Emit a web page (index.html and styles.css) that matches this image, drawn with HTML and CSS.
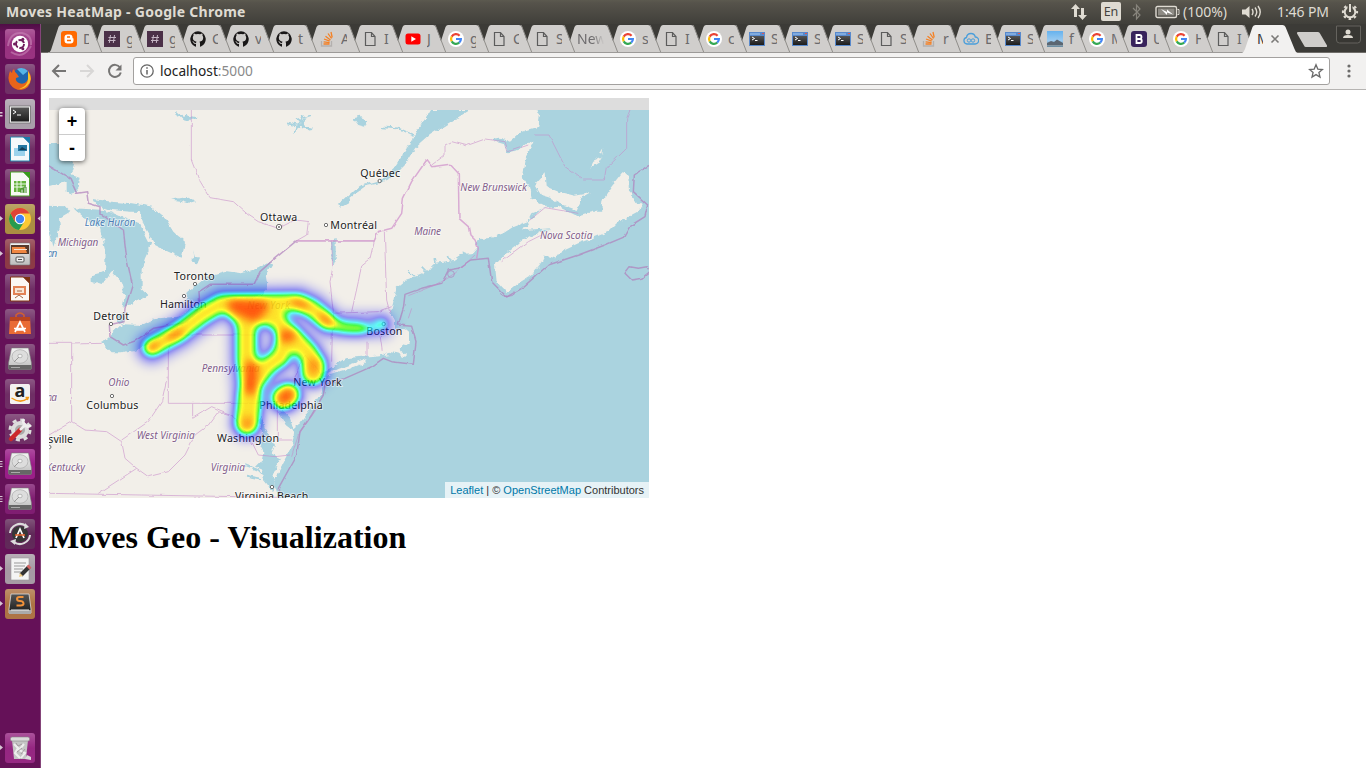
FILE: index.html
```html
<!DOCTYPE html>
<html lang="en">
<head>
<meta charset="utf-8">
<title>Moves HeatMap</title>
<link rel="stylesheet" href="styles.css">
</head>
<body>
<svg class="defs" width="0" height="0" aria-hidden="true">
  <defs>
    <linearGradient id="gloss" x1="0" y1="0" x2="0" y2="1"><stop offset="0" stop-color="#fff" stop-opacity=".22"/><stop offset=".5" stop-color="#fff" stop-opacity=".02"/><stop offset="1" stop-color="#fff" stop-opacity=".03"/></linearGradient>
    <linearGradient id="steel" x1="0" y1="0" x2="0" y2="1"><stop offset="0" stop-color="#f4f4f4"/><stop offset="1" stop-color="#bcbcbc"/></linearGradient>
    <linearGradient id="dark" x1="0" y1="0" x2="0" y2="1"><stop offset="0" stop-color="#555"/><stop offset="1" stop-color="#1c1c1c"/></linearGradient>
    <linearGradient id="sky" x1="0" y1="0" x2="0" y2="1"><stop offset="0" stop-color="#66b2ee"/><stop offset=".6" stop-color="#9ccbf0"/><stop offset="1" stop-color="#69899d"/></linearGradient>
  </defs>
  <symbol id="tab" viewBox="0 0 56 29"><path d="M0 29 Q2 28.500 3 26 L10.500 3 Q11.500 1 13 1 H41 Q43 1 44 3 L51.500 24 L54 29Z" fill="#d0cecc"/><path d="M43 1 L44 3 L54 29" fill="none" stroke="#8f8d8a"/></symbol>
  <symbol id="blog" viewBox="0 0 16 16"><rect width="16" height="16" rx="3" fill="#ff6a00"/><path d="M3.500 6.500a3 3 0 0 1 3-3h2a3 3 0 0 1 3 3q0 1 1 1v2a3 3 0 0 1-3 3h-3a3 3 0 0 1-3-3z" fill="#fff"/><path d="M6 6h3M6 9.500h4" stroke="#ff6a00" stroke-width="1.300"/></symbol>
  <symbol id="hash" viewBox="0 0 16 16"><rect width="16" height="16" fill="#4b3048"/><path d="M6.500 4 5.300 12M10.500 4 9.300 12M4.500 6.500h7.500M4 9.500h7.500" stroke="#c5b5c4" fill="none"/></symbol>
  <symbol id="git" viewBox="0 0 16 16"><path fill="#191717" d="M8 .2a8 8 0 0 0-2.500 15.500c.4 0 .5-.2.500-.4v-2.500c-2 .4-2.600-.9-2.800-1.500-.3-.5-.6-.8-1-1 .8-.3 1.500.4 1.800 1 .6.8 1.300.9 2 .6.1-.6.3-1 .6-1.200-2-.3-3.800-1.200-3.800-3.900 0-.9.3-1.600.8-2.200-.1-.3-.3-1.200.1-2.200 0 0 .7-.2 2.200.9a8 8 0 0 1 4.200 0c1.500-1.100 2.200-.9 2.200-.9.4 1 .2 1.900.1 2.200.5.600.8 1.300.8 2.200 0 2.800-1.800 3.600-3.800 3.900.4.3.6.9.6 1.500v3.100c0 .2.100.5.500.4A8 8 0 0 0 8 .2z"/></symbol>
  <symbol id="so" viewBox="0 0 16 16"><path d="M2.500 10v5h10v-5" fill="none" stroke="#b3b0ae" stroke-width="1.300"/><path d="M4.500 13h6M4.600 10.800l6 .8M5 8l5.700 2.100M6.500 5.200l5 3.700M9 2.500l3.500 5M12 1l1.200 5.500" stroke="#f48024" stroke-width="1.300"/></symbol>
  <symbol id="doc" viewBox="0 0 16 16"><path d="M3.500 1.500h6l3.500 4v9h-9.500zM9.500 1.500v4H13" fill="none" stroke="#5c5c5c" stroke-width="1.200"/></symbol>
  <symbol id="yt" viewBox="0 0 16 16"><rect x=".5" y="2.500" width="15" height="11" rx="2.500" fill="#f00"/><path d="M6.300 5.300 11 8l-4.700 2.700z" fill="#fff"/></symbol>
  <symbol id="goo" viewBox="0 0 16 16"><circle cx="8" cy="8" r="8" fill="#fff"/><g fill="none" stroke-width="2.200"><path d="M11.600 4.700A4.900 4.900 0 0 0 3.700 5.600" stroke="#ea4335"/><path d="M3.700 5.600a5 5 0 0 0 0 4.800" stroke="#fbbc05"/><path d="M3.700 10.400a4.900 4.900 0 0 0 7.500 1.300" stroke="#34a853"/><path d="M11.200 11.700A5 5 0 0 0 12.900 8H8" stroke="#4285f4"/></g></symbol>
  <symbol id="term" viewBox="0 0 16 16"><rect y="1" width="16" height="14" fill="#5889cc"/><path d="M1 3h10" stroke="#a9cdf0"/><path d="M13 2.500h2" stroke="#d55"/><rect x="1" y="5" width="14" height="9" fill="url(#dark)"/><path d="m3 6 2.500 1.500L3 9M6 9.500h2.500" fill="none" stroke="#fff"/></symbol>
  <symbol id="cloud" viewBox="0 0 16 16"><path d="M4 13a3.300 3.300 0 0 1-.5-6.500Q4 2.500 8 2.500q3.500 0 4.300 3.500a3.500 3.500 0 0 1-.3 7z" fill="none" stroke="#4a9eda" stroke-width="1.300"/><circle cx="6" cy="9.500" r="1.700" fill="none" stroke="#4a9eda"/><circle cx="10" cy="9.500" r="1.700" fill="none" stroke="#4a9eda"/></symbol>
  <symbol id="pic" viewBox="0 0 16 16"><rect width="16" height="16" fill="url(#sky)"/><path d="M0 12 4 10l3 1 3-2.500 6 3.500v2H0z" fill="#5b6672"/><path d="M0 14.500h16" stroke="#8297a5"/></symbol>
  <symbol id="boot" viewBox="0 0 16 16"><rect width="16" height="16" rx="3" fill="#38235c"/><path d="M5.500 4h3a2 2 0 0 1 0 4h-3zM5.500 8h3.300a2 2 0 0 1 0 4H5.500z" fill="none" stroke="#fff" stroke-width="1.800"/></symbol>
  <symbol id="disk" viewBox="0 0 30 30"><path d="M6.500 4h17l3 15v5a1.500 1.500 0 0 1-1.500 1.500H5A1.500 1.500 0 0 1 3.500 24v-5z" fill="url(#steel)" stroke="#777" stroke-width=".6"/><path d="M3.500 21h23v3a1.500 1.500 0 0 1-1.500 1.500H5A1.500 1.500 0 0 1 3.500 24z" fill="#666"/><path d="M6 23.500h9" stroke="#aaa"/><ellipse cx="15" cy="12.500" rx="8" ry="6.800" fill="#ddd" stroke="#b0b0b0" stroke-width=".8"/><ellipse cx="15" cy="12" rx="2.200" ry="1.800" fill="#f5f5f5" stroke="#999" stroke-width=".6"/><path d="m9 18 5-5" stroke="#999"/></symbol>
</svg>

<header class="panel">
  <span class="wintitle">Moves HeatMap - Google Chrome</span>
  <div class="indicators">
    <svg class="net" width="18" height="18" viewBox="0 0 18 18"><path d="M5.500 1 10 6H7v8H4V6H1zM12.500 17 8 12h3V5h3v7h3z" fill="#dfdbd2"/></svg>
    <span class="lang">En</span>
    <svg class="bt" width="10" height="18" viewBox="0 0 10 18"><path d="M1 5l7 7-3.500 4V2L8 6l-7 7" fill="none" stroke="#87847c" stroke-width="1.200"/></svg>
    <svg class="bat" width="25" height="14" viewBox="0 0 25 14"><rect x="1" y="1.500" width="20.500" height="11" rx="1.500" fill="none" stroke="#dfdbd2" stroke-width="1.400"/><rect x="3" y="3.500" width="16.500" height="7" fill="#8e8b84"/><path d="M22.500 4.500H24v5h-1.500" fill="none" stroke="#dfdbd2"/><path d="m6 4 6 3v-2.500l6 5-6-2v2.500z" fill="#fff"/></svg>
    <span class="pct">(100%)</span>
    <svg class="vol" width="21" height="16" viewBox="0 0 21 16"><path d="M1 5.500h3.500l4-3.500v12l-4-3.500H1z" fill="#dfdbd2"/><path d="M11 5q2 3 0 6M14 3.500q3.500 4.500 0 9M17 2q4.500 6 0 12" fill="none" stroke="#dfdbd2" stroke-width="1.400"/></svg>
    <span class="clock">1:46 PM</span>
    <svg class="gear" width="18" height="18" viewBox="-9 -9 18 18"><circle r="5.300" fill="none" stroke="#dfdbd2" stroke-width="2"/><circle r="7" fill="none" stroke="#dfdbd2" stroke-width="2.200" stroke-dasharray="2.500 3" stroke-dashoffset="1.200"/><path d="M-2.500-9h5v7h-5z" fill="#504e46"/><path d="M0-8v8" stroke="#dfdbd2" stroke-width="2"/></svg>
  </div>
</header>

<div class="desktop">
<nav class="launcher">
  <svg class="tile" viewBox="0 0 30 30"><rect width="30" height="30" rx="3" fill="#962d7d"/><rect width="30" height="30" rx="3" fill="url(#gloss)"/><path d="M3 17Q5 3 17 4q10 2 9 12M6 23q12 8 20-6" fill="none" stroke="#c985b8" stroke-width="2" opacity=".6"/><circle cx="15" cy="15" r="8.200" fill="#fff"/><circle cx="15" cy="15" r="4" fill="none" stroke="#6f1d5c" stroke-width="1.900" stroke-dasharray="6.800 1.600"/><g fill="#6f1d5c"><circle cx="9.500" cy="15" r="1.500"/><circle cx="17.800" cy="10.200" r="1.500"/><circle cx="17.800" cy="19.800" r="1.500"/></g></svg>
  <svg class="tile" viewBox="0 0 30 30"><rect width="30" height="30" rx="3" fill="#6c2a62"/><rect width="30" height="30" rx="3" fill="url(#gloss)"/><circle cx="16" cy="14" r="9.500" fill="#1f66ad"/><path d="M12 5q6-3 11 2l-5 4z" fill="#56b6e6"/><path d="M5 7Q2 14 5 20q4 6 11 6 9-1 10-11 0-5-3-8 2 6-1 10-3 4-8 2-4-2-3-5l3-1-2-3q-2-1-3-5-2 1-2 4z" fill="#e8641b"/><path d="M23 7q6 9-1 15-3 3-8 3 9-3 9-10z" fill="#fbc22c"/></svg>
  <svg class="tile" viewBox="0 0 30 30"><rect width="30" height="30" rx="3" fill="#a79da8"/><rect width="30" height="30" rx="3" fill="url(#gloss)"/><rect x="4.500" y="7" width="21" height="17" fill="#eee" stroke="#666" stroke-width=".7"/><rect x="6" y="8.500" width="18" height="14" fill="url(#dark)"/><path d="m8 11 3 2-3 2M12 16h4" fill="none" stroke="#fff"/></svg>
  <svg class="tile" viewBox="0 0 30 30"><rect width="30" height="30" rx="3" fill="#6c2a62"/><rect width="30" height="30" rx="3" fill="url(#gloss)"/><path d="M5.500 3h13l6 6v18h-19z" fill="#f4f8fa" stroke="#2686ad"/><path d="M18 3h7v7z" fill="#1c7bab"/><rect x="9" y="14" width="11" height="8" fill="#9bd2ec"/><rect x="13" y="11" width="9" height="6" fill="#2477a2"/><path d="m14 16 3-3 5 3z" fill="#143e57"/></svg>
  <svg class="tile" viewBox="0 0 30 30"><rect width="30" height="30" rx="3" fill="#6c2a62"/><rect width="30" height="30" rx="3" fill="url(#gloss)"/><path d="M5.500 3h13l6 6v18h-19z" fill="#f7faf4" stroke="#4d9d2b"/><path d="M18 3h7v7z" fill="#379b1b"/><rect x="9" y="12" width="12" height="11" fill="#65b33c"/><path d="M9 15h12M9 18h12M12 12v11M16 12v7" stroke="#eef8e8"/><path d="M16 24v-4h2v4M19 24v-6h2v6" stroke="#3e8925" fill="#fff"/></svg>
  <svg class="tile" viewBox="0 0 30 30"><rect width="30" height="30" rx="3" fill="#a98b3d"/><rect width="30" height="30" rx="3" fill="url(#gloss)"/><circle cx="15" cy="15" r="11" fill="#fcc934"/><path d="M5.500 9.500A11 11 0 0 1 24.500 9.500H15L10 18z" fill="#df4437"/><path d="M5.500 9.500A11 11 0 0 0 14 26l5-8h-9z" fill="#279b50"/><circle cx="15" cy="15" r="5.200" fill="#fff"/><circle cx="15" cy="15" r="4.200" fill="#4285f4"/></svg>
  <svg class="tile" viewBox="0 0 30 30"><rect width="30" height="30" rx="3" fill="#893541"/><rect width="30" height="30" rx="3" fill="url(#gloss)"/><rect x="5" y="4" width="20" height="22" rx="1" fill="url(#steel)" stroke="#777" stroke-width=".6"/><rect x="6" y="6" width="18" height="9" fill="#563a2c"/><path d="M7 8h13l2 6H7z" fill="#ef8641"/><path d="M9 10.500h13" stroke="#f8e2cf"/><rect x="11" y="18" width="8" height="5" rx="1" fill="#eee" stroke="#555"/><path d="M13 20.500h4" stroke="#555"/></svg>
  <svg class="tile" viewBox="0 0 30 30"><rect width="30" height="30" rx="3" fill="#6c2a62"/><rect width="30" height="30" rx="3" fill="url(#gloss)"/><path d="M5.500 3h13l6 6v18h-19z" fill="#fbf7f2" stroke="#843515"/><path d="M18 3h7v7z" fill="#7c3213"/><rect x="8" y="12" width="13" height="9" fill="#e28254"/><rect x="10" y="14" width="9" height="5" fill="#f8e5d3"/><path d="m10 24 4-3 4 3M12 17h5" stroke="#a56743" fill="none"/></svg>
  <svg class="tile" viewBox="0 0 30 30"><rect width="30" height="30" rx="3" fill="#6c2a62"/><rect width="30" height="30" rx="3" fill="url(#gloss)"/><path d="M11 9V6q4-4 8 0v3" fill="none" stroke="#d15f30" stroke-width="1.500"/><path d="M5 8h20l1 17H4z" fill="#e96b35"/><path d="M5 8h20v4H5z" fill="#b9441f"/><path d="m10 23 5-10 5 10M9 19.500h12M11 21h8" fill="none" stroke="#fff" stroke-width="1.700"/></svg>
  <svg class="tile" viewBox="0 0 30 30"><rect width="30" height="30" rx="3" fill="#6c2a62"/><rect width="30" height="30" rx="3" fill="url(#gloss)"/><use href="#disk"/></svg>
  <svg class="tile" viewBox="0 0 30 30"><rect width="30" height="30" rx="3" fill="#6c2a62"/><rect width="30" height="30" rx="3" fill="url(#gloss)"/><rect x="5" y="5" width="20" height="20" rx="1.500" fill="#f4f2f1"/><text x="15" y="18" text-anchor="middle" class="amz">a</text><path d="M6.500 19q9 6 16 .5M20.500 18.500h2.800l-1 2.500" fill="none" stroke="#f39a19" stroke-width="1.500"/></svg>
  <svg class="tile" viewBox="0 0 30 30"><rect width="30" height="30" rx="3" fill="#6c2a62"/><rect width="30" height="30" rx="3" fill="url(#gloss)"/><circle cx="15" cy="16" r="7" fill="#aaa" stroke="#ddd" stroke-width="4"/><circle cx="15" cy="16" r="10" fill="none" stroke="#ddd" stroke-width="3" stroke-dasharray="4 3.850"/><path d="m6 25 9-9" stroke="#cc292c" stroke-width="4.500" stroke-linecap="round"/><path d="m15 16 6-6m-2-5q-2 3 1 6 3 3 6 0" fill="none" stroke="#eee" stroke-width="2.600"/></svg>
  <svg class="tile" viewBox="0 0 30 30"><rect width="30" height="30" rx="3" fill="#971885"/><rect width="30" height="30" rx="3" fill="url(#gloss)"/><use href="#disk"/></svg>
  <svg class="tile" viewBox="0 0 30 30"><rect width="30" height="30" rx="3" fill="#7c176e"/><rect width="30" height="30" rx="3" fill="url(#gloss)"/><use href="#disk"/></svg>
  <svg class="tile" viewBox="0 0 30 30"><rect width="30" height="30" rx="3" fill="#5d2455"/><rect width="30" height="30" rx="3" fill="url(#gloss)"/><circle cx="15" cy="15" r="8" fill="#373737"/><path d="M5 14a10 10 0 0 1 16-7M25 16a10 10 0 0 1-16 7" fill="none" stroke="#ddd" stroke-width="2"/><path d="m20 4 4 4-5 2zM10 26l-5-4 6-2z" fill="#ddd"/><path d="m11 19 4-9 4 9" fill="none" stroke="#fff" stroke-width="1.700"/><path d="M10 16h10" stroke="#e8642c" stroke-width="1.500"/></svg>
  <svg class="tile" viewBox="0 0 30 30"><rect width="30" height="30" rx="3" fill="#a497a2"/><rect width="30" height="30" rx="3" fill="url(#gloss)"/><rect x="6" y="4" width="18" height="22" fill="#f4f4f4" stroke="#999" stroke-width=".6"/><path d="M9 9h12M9 12h11M9 15h9M9 18h7" stroke="#999"/><path d="m16 21 8-8" stroke="#333" stroke-width="4"/><path d="m23 14 2-2" stroke="#d36464" stroke-width="4"/><path d="m14 23 1-4 3 3z" fill="#edca82"/></svg>
  <svg class="tile" viewBox="0 0 30 30"><rect width="30" height="30" rx="3" fill="#ac7040"/><rect width="30" height="30" rx="3" fill="url(#gloss)"/><path d="M6 5h18l2 15v4H4v-4z" fill="url(#dark)" stroke="#ddd" stroke-width=".8"/><path d="M4 21h22v4H4z" fill="#aaa"/><path d="M6 21h18" stroke="#eee"/><path d="M18.500 8h-4q-2.500 0-2.500 2t3 2 3.500 2.200-3 2.300h-4" fill="none" stroke="#f2923a" stroke-width="2"/></svg>
  <svg class="tile trash" viewBox="0 0 30 30"><rect width="30" height="30" rx="3" fill="#93227f"/><rect width="30" height="30" rx="3" fill="url(#gloss)"/><path d="m7 7 2 19h12l2-19z" fill="#c5c5c5"/><path d="m9 11 4 4-3 5 5 5M19 11l-5 6 6 3-4 5" stroke="#eee" stroke-width="2" fill="none"/><path d="m11 10 2 3 4-2M12 19l5-4M16 21l4-5" stroke="#a5999f" fill="none"/><rect x="5.500" y="4" width="19" height="4" rx="1.500" fill="#dadada" stroke="#888" stroke-width=".6"/><path d="m20 26 2-4 4 2v3z" fill="#ddd"/></svg>
  <svg class="pips" width="41" height="744" viewBox="0 24 41 744"><g fill="#d7c6d3"><path d="M0 112h2.500v1.500H0zM0 115h2.500v1.500H0zM0 461h2.500v1H0zM0 463.500h2.500v1H0zM0 466h2.500v1H0zM0 496h2.500v1H0zM0 498.500h2.500v1H0zM0 501h2.500v1H0zM0 216l3 2.500-3 2.500zM0 251l3 2.500-3 2.500zM0 566l3 2.500-3 2.500zM0 601l3 2.500-3 2.500zM0 745l3 2.500-3 2.500zM40.500 216l-3 2.500 3 2.500z"/></g></svg>
</nav>

<div class="browser">
  <div class="strip">
    <svg class="shapes" width="1325" height="29" viewBox="41 0 1325 29">
      <path d="M41 28.500H1366" stroke="#6f6d69"/>
      <g>
      <use href="#tab" x="1201" width="56" height="29"/><use href="#tab" x="1159" width="56" height="29"/><use href="#tab" x="1117" width="56" height="29"/><use href="#tab" x="1075" width="56" height="29"/><use href="#tab" x="1033" width="56" height="29"/><use href="#tab" x="991" width="56" height="29"/><use href="#tab" x="949" width="56" height="29"/><use href="#tab" x="907" width="56" height="29"/><use href="#tab" x="865" width="56" height="29"/><use href="#tab" x="822" width="56" height="29"/><use href="#tab" x="779" width="56" height="29"/><use href="#tab" x="736" width="56" height="29"/><use href="#tab" x="693" width="56" height="29"/><use href="#tab" x="650" width="56" height="29"/><use href="#tab" x="607" width="56" height="29"/><use href="#tab" x="564" width="56" height="29"/><use href="#tab" x="521" width="56" height="29"/><use href="#tab" x="478" width="56" height="29"/><use href="#tab" x="435" width="56" height="29"/><use href="#tab" x="392" width="56" height="29"/><use href="#tab" x="349" width="56" height="29"/><use href="#tab" x="306" width="56" height="29"/><use href="#tab" x="263" width="56" height="29"/><use href="#tab" x="220" width="56" height="29"/><use href="#tab" x="177" width="56" height="29"/><use href="#tab" x="134" width="56" height="29"/><use href="#tab" x="91" width="56" height="29"/><use href="#tab" x="48" width="56" height="29"/>
      </g>
      <path d="M48 28.500H1243" stroke="#9c9a98"/>
      <path d="M1242 29q2-1 3-4l7.500-22q1-2 3-2h27q2 0 3 2l9 22q1 3 3 4z" fill="#f2f1f0"/>
      <path d="M1298 8h20q1.500 0 2 1.500l7 12q.5 1.500-1 1.500h-20q-1.500 0-2-1.500l-7-12q-.5-1.500 1-1.500z" fill="#cfcdca"/>
      <path d="M1336.500 2v14q0 3 3 3h18q3 0 3-3V2z" fill="#383733" stroke="#65635e"/>
      <circle cx="1348" cy="8" r="2.500" fill="#dfdbd2"/><path d="M1343 14q0-3 5-3t5 3z" fill="#dfdbd2"/>
    </svg>
    <div class="tabs">
      <div class="t"><svg><use href="#blog"/></svg><span>D</span></div><div class="t"><svg><use href="#hash"/></svg><span>g</span></div><div class="t"><svg><use href="#hash"/></svg><span>g</span></div><div class="t"><svg><use href="#git"/></svg><span>C</span></div><div class="t"><svg><use href="#git"/></svg><span>v</span></div><div class="t"><svg><use href="#git"/></svg><span>t</span></div><div class="t"><svg><use href="#so"/></svg><span>A</span></div><div class="t"><svg><use href="#doc"/></svg><span>I</span></div><div class="t"><svg><use href="#yt"/></svg><span>J</span></div><div class="t"><svg><use href="#goo"/></svg><span>g</span></div><div class="t"><svg><use href="#doc"/></svg><span>C</span></div><div class="t"><svg><use href="#doc"/></svg><span>S</span></div><div class="t wide"><span>New</span></div><div class="t"><svg><use href="#goo"/></svg><span>s</span></div><div class="t"><svg><use href="#doc"/></svg><span>I</span></div><div class="t"><svg><use href="#goo"/></svg><span>c</span></div><div class="t"><svg><use href="#term"/></svg><span>S</span></div><div class="t"><svg><use href="#term"/></svg><span>S</span></div><div class="t"><svg><use href="#term"/></svg><span>S</span></div><div class="t"><svg><use href="#doc"/></svg><span>S</span></div><div class="t s"><svg><use href="#so"/></svg><span>r</span></div><div class="t s"><svg><use href="#cloud"/></svg><span>E</span></div><div class="t s"><svg><use href="#term"/></svg><span>S</span></div><div class="t s"><svg><use href="#pic"/></svg><span>f</span></div><div class="t s"><svg><use href="#goo"/></svg><span>M</span></div><div class="t s"><svg><use href="#boot"/></svg><span>U</span></div><div class="t s"><svg><use href="#goo"/></svg><span>H</span></div><div class="t s"><svg><use href="#doc"/></svg><span>I</span></div><div class="t on"><span>M</span><svg viewBox="0 0 16 16"><path d="m4.500 4.500 7 7m0-7-7 7" stroke="#7b7a78" stroke-width="1.600"/></svg></div>
    </div>
  </div>
  <div class="toolbar">
    <svg class="nav" width="84" height="20" viewBox="50 61 84 20" fill="none" stroke-width="2"><path d="M66 71H53m6-6-6 6 6 6" stroke="#767574"/><path d="M80 71h13m-6-6 6 6-6 6" stroke="#d8d7d6"/><path d="M120 67.500a6 6 0 1 0 .8 5" stroke="#767574"/><path d="M121.500 64.500v6h-6z" fill="#767574"/></svg>
    <div class="omni"><svg width="14" height="14" viewBox="0 0 14 14"><circle cx="7" cy="7" r="6.200" fill="none" stroke="#666" stroke-width="1.300"/><path d="M7 6v4.500M7 3.200v1.500" stroke="#666" stroke-width="1.500"/></svg><span class="url">localhost<i>:5000</i></span><svg class="star" width="16" height="16" viewBox="0 0 16 16"><path d="m8 1.800 1.800 4.300 4.600.4-3.500 3 1.100 4.600-4-2.500-4 2.500 1.100-4.600-3.500-3 4.600-.4z" fill="none" stroke="#6a6a6a" stroke-width="1.300"/></svg></div>
    <svg class="menu" width="4" height="14" viewBox="0 0 4 14" fill="#6d6c6b"><circle cx="2" cy="2" r="1.600"/><circle cx="2" cy="7" r="1.600"/><circle cx="2" cy="12" r="1.600"/></svg>
  </div>

  <main class="page">
    <div class="map">
      <svg width="600" height="400" viewBox="12 9 1800 1200">
        <defs>
          <filter id="rough" x="0" y="0" width="1" height="1"><feTurbulence type="fractalNoise" baseFrequency=".045" numOctaves="4" seed="4"/><feDisplacementMap in="SourceGraphic" scale="17" xChannelSelector="R" yChannelSelector="G"/></filter>
          <filter id="wiggle" filterUnits="userSpaceOnUse" x="0" y="0" width="1830" height="1230"><feTurbulence type="fractalNoise" baseFrequency=".03" numOctaves="3" seed="9"/><feDisplacementMap in="SourceGraphic" scale="9" xChannelSelector="R" yChannelSelector="G"/></filter>
          <filter id="heat" filterUnits="userSpaceOnUse" x="150" y="450" width="1200" height="760" color-interpolation-filters="sRGB">
            <feGaussianBlur stdDeviation="13"/>
            <feColorMatrix values="0 0 0 1 0  0 0 0 1 0  0 0 0 1 0  0 0 0 1 0"/>
            <feComponentTransfer><feFuncR type="table" tableValues="0 0 0 0 0 0 0 0 1 1 1"/><feFuncG type="table" tableValues="0 0 0 0 0 .5 1 1 1 .5 0"/><feFuncB type="table" tableValues="1 1 1 1 1 1 1 0 0 0 0"/></feComponentTransfer>
          </filter>
          <g id="track" stroke-linecap="round" stroke-linejoin="round">
            <path d="M320 757 400 714 470 660 530 625 760 622 800 640 848 680"/>
            <path d="M550 628 595 670 685 655M602 670 604 800 614 920 606 985M685 665 735 720 790 775 808 810 805 832M722 725 708 785 668 812 635 855"/>
            <path d="M565 625H675L685 665 600 665Z"/>
            <path d="M718 908 728 900"/>
          </g>
        </defs>
        <rect x="12" y="9" width="1800" height="1200" fill="#f2efe9"/>
        <g filter="url(#rough)" fill="#aad3df">
          <path d="M-40-30H2000V1300H1590L600 1300H700V1209L690 1175 688 1158 702 1128 725 1082 742 1050 748 1010 722 990 702 950 712 948 735 970 745 1000 765 985 798 942 824 900 835 865 825 840 850 825 900 790 950 785 985 783 1010 780 1035 770 1060 776 1085 786 1085 775 1060 765 1092 742 1092 710 1080 700 1050 698 1050 680 1038 650 1045 620 1050 595 1055 575 1080 555 1110 545 1145 530 1165 508 1215 500 1245 480 1280 478 1295 460 1290 445 1305 432 1340 428 1375 415 1405 395 1450 378 1462 355 1510 335 1495 328 1460 310 1452 275 1430 245 1440 190 1452 168 1465 145 1455 140 1420 165 1390 172 1375 145 1335 133 1365 128 1395 140 1430 110 1480 95 1485 60 1478 45 1478-30Z"/>
          <path d="M1155 45H1275L1210 85 1155 120 1110 160 1080 210 1045 245 1010 263 965 273 920 305 898 323 897 316 945 272 1005 256 1047 218 1085 160 1110 120Z"/>
          <path d="M-10 147H48L62 190 90 208 80 240 107 250 98 280 84 296 65 290 65 260 12 275-10 275Z"/>
          <path d="M-10 332 60 334 75 350 42 370 45 395 25 455 12 400-10 400Z"/>
          <path d="M85 340 180 345 250 375 285 385 300 415 318 450 300 490 290 520 290 580 310 600 280 615 245 630 232 640 240 600 228 560 200 528 170 570 140 560 140 540 180 530 182 470 165 400 120 370Z"/>
          <path d="M283 348 330 345 360 370 385 410 420 440 410 488 370 470 330 450 300 400ZM145 312 200 320 260 325 325 335 325 352 260 350 200 345 155 330Z"/>
          <path d="M420 618 430 590 455 570 490 542 540 528 590 535 640 520 672 500 682 506 662 540 668 575 640 604 560 612 470 625Z"/>
          <path d="M172 742 205 712 230 688 300 690 340 670 400 665 455 635 490 610 470 650 400 700 330 740 270 765 230 772 200 772ZM212 660 240 655 242 680 222 687Z"/>
          <path d="M393 45 415 65 425 60 458 68 450 74 420 74 395 60ZM378 314 410 308 435 305 450 322 435 326 410 318ZM875 330 900 312 918 308 912 320 885 335ZM435 495 448 488 445 465 450 485 465 488 455 510ZM925 70 945 65 968 75 960 95 940 90Z"/>
          <path d="M855 440 872 432 872 490 862 515Z"/>
          <path d="M640 975 652 1012 638 1038 655 1070 650 1095 630 1115 655 1125 652 1150 668 1170 682 1190 690 1175 685 1130 706 1090 680 1078 690 1050 662 1000 650 965Z"/>
        </g>
        <g filter="url(#rough)" fill="#f2efe9">
          <path d="M1490 342 1540 335 1595 362 1640 350 1668 350 1672 318 1700 275 1732 235 1750 240 1752 285 1770 322 1793 330 1780 350 1715 385 1690 410 1645 428 1600 445 1545 470 1530 490 1500 480 1490 500 1460 540 1420 565 1385 594 1355 560 1350 510 1378 480 1430 440 1490 410 1520 400 1470 403 1435 405 1455 375Z"/>
          <path d="M1502 235 1470 270 1488 300 1515 308 1540 325 1595 345 1610 310 1638 294 1590 302 1540 290 1505 275Z"/>
          <path d="M1636 218 1645 200 1670 188 1662 202ZM1665 175 1675 160 1672 175ZM845 840 880 822 965 792 955 805 905 825 850 843ZM1010 775 1040 780 1020 782ZM692 1115 710 1085 708 1100 695 1145Z"/>
        </g>
        <g fill="none" stroke="#aad3df" stroke-width="3" filter="url(#rough)"><path d="M745 115 770 70 800 60M725 85 800 100M750 70 795 105M770 60V100M760 95 785 70M1010 97 1060 100 1105 120M600 1110 640 1125 655 1140M600 1145 650 1155M1090 525 1110 545M1130 515 1150 535M1170 490 1175 515M1210 480 1220 500M1255 475 1260 490" stroke-width="5"/></g>
        <g fill="none" stroke="#b080bd" filter="url(#wiggle)" stroke-linejoin="round">
          <g stroke-width="4.500" opacity=".7"><path d="M12 213 75 250 95 295 125 290 130 325 165 335 165 355 235 405 245 490 262 570 240 640 237 680 193 690 195 725 235 750 270 738 325 700 420 683 465 640 462 590 495 568H627L645 530 690 490 755 437H988"/><path stroke="#cf8fcb" d="M755 437H988L1000 410 1040 400 1070 355 1075 310 1100 260 1145 195 1160 215 1215 208 1240 235 1242 370 1270 395 1275 420 1290 435 1300 460 1295 490"/>
          <path d="M1277 495 1330 490 1340 560 1385 606 1430 580 1510 510 1600 480 1680 450 1740 425 1760 390 1800 365 1808 330 1765 290 1768 240 1815 208M1277 495 1240 520 1210 525 1190 565 1130 580 1080 598 1075 640 1060 690 1100 694 1113 740 1105 808 1040 800 1015 790 980 815 900 850 840 870 835 900 800 960 765 1010 755 1080 700 1180 703 1209M1740 535 1755 515 1780 520 1805 515 1815 530 1790 550 1760 555Z"/></g>
          <g stroke-width="3" stroke="#c687c8" opacity=".55"><path d="M439 45V195L460 250 495 308 565 320 610 360 640 380 700 400 750 375 790 380 785 420 755 437M860 437 863 520 855 560 870 700 862 705 860 800M988 437 975 490 950 510 940 560 920 650M1018 410 1025 615 1035 655M1160 210 1200 180V150L1220 140 1265 152 1320 132 1380 140 1390 170 1450 150M1465 120H1512L1560 215 1615 255H1678L1684 220 1745 160V70L1755 45M1455 375 1500 338 1600 355M860 655 1000 650 1040 635M966 785V740M1005 720 1012 770M12 742H80V980L120 1005 185 1010 230 1040 240 1090 275 1120 310 1145 370 1130 420 1080 450 1020 490 990 520 950 560 960M80 747 170 745M370 750V925H690M370 720H630M230 1035 310 980 350 920 367 845M443 925V970L500 935 560 960 610 1020 640 1080 690 1085 735 1080M697 935V1035H745M12 1195 290 1200 700 1207M12 1020 80 980M160 1195 275 1120M745 850 780 780 825 835"/><path d="M1090 602 1170 570 1230 535 1290 480M1100 640 1090 670M1370 500 1450 440 1490 420M740 1085 760 1020 820 935"/></g>
        </g>
        <g fill="none" stroke="#b080bd" stroke-width="3" opacity=".7"><circle cx="1218" cy="537" r="10"/><path d="M1365 595a24 14 0 0 0 45 0"/></g>
        <g class="lbl">
          <g class="st"><text x="38" y="453" textLength="122">Michigan</text><text x="1246" y="288" textLength="200">New Brunswick</text><text x="1108" y="419" textLength="80">Maine</text><text x="1485" y="431" textLength="157">Nova Scotia</text><text x="190" y="873" textLength="63">Ohio</text><text x="470" y="830" textLength="174">Pennsylvania</text><text x="275" y="1031" textLength="174">West Virginia</text><text x="497" y="1129" textLength="103">Virginia</text><text x="3" y="1129" textLength="117">Kentucky</text><text x="-50" y="917" textLength="86">Indiana</text><text x="607" y="642" textLength="128">New York</text></g>
          <g class="lake"><text x="119" y="392" textLength="152">Lake Huron</text><text x="7" y="485" textLength="30">an</text></g>
          <g class="city"><text x="946" y="246" textLength="119">Québec</text><text x="645" y="378" textLength="112">Ottawa</text><text x="856" y="402" textLength="140">Montréal</text><text x="387" y="554" textLength="122">Toronto</text><text x="345" y="640" textLength="140">Hamilton</text><text x="145" y="675" textLength="107">Detroit</text><text x="124" y="942" textLength="156">Columbus</text><text x="-54" y="1043" textLength="138">Louisville</text><text x="570" y="1214" textLength="220">Virginia Beach</text></g>
          <g fill="#fff" stroke="#555" stroke-width="2.500"><circle cx="1004" cy="258" r="5"/><circle cx="702" cy="396" r="8"/><circle cx="702" cy="396" r="2"/><circle cx="843" cy="390" r="5"/><circle cx="450" cy="567" r="5"/><circle cx="417" cy="603" r="5"/><circle cx="198" cy="687" r="5"/><circle cx="201" cy="903" r="5"/><circle cx="13" cy="1056" r="5"/><circle cx="681" cy="1176" r="5"/><circle cx="1016" cy="687" r="5"/></g>
          <g class="city"><text x="964" y="721" textLength="108">Boston</text><text x="745" y="872" textLength="145">New York</text><text x="643" y="942" textLength="190">Philadelphia</text><text x="516" y="1041" textLength="186">Washington</text></g>
        </g>
        <g filter="url(#heat)" fill="none" stroke="#000" stroke-linecap="round" stroke-linejoin="round">
          <g opacity=".12"><use href="#track" stroke-width="125"/><path d="M850 690H1012" stroke-width="100"/></g>
          <g opacity=".2"><use href="#track" stroke-width="95"/><path d="M850 690H1005" stroke-width="75"/></g>
          <g opacity=".75"><use href="#track" stroke-width="62"/><path d="M604 690 604 800M565 630H670M740 722 790 775 806 810" stroke-width="68"/><path d="M614 900 606 985M805 810 804 834M714 910 730 899" stroke-width="82"/><path d="M850 683 900 698 942 700" stroke-width="46" opacity=".88"/></g>
          <path d="M970 700 1012 686" stroke-width="36" opacity=".45"/>
          <path d="M1012 687h2" stroke-width="40" opacity=".25"/>
          <g opacity=".65"><path d="M568 632 650 636 625 660Z" fill="#000" stroke-width="44"/><path d="M620 815 616 880" stroke-width="42"/><path d="M716 910 728 900" stroke-width="42"/><path d="M716 723h18" stroke-width="38"/></g>
          <g opacity=".4"><path d="M806 805v16M607 982v6M836 668 850 680M755 625l20 6M380 722l20-8M322 758l5-4" stroke-width="38"/></g>
        </g>
      </svg>
      <div class="grayband"></div>
      <div class="zoom"><a>+</a><a>-</a></div>
      <div class="attr"><a>Leaflet</a> | © <a>OpenStreetMap</a> Contributors</div>
    </div>
    <h1>Moves Geo - Visualization</h1>
  </main>
</div>
</div>
</body>
</html>
```
FILE: styles.css
```css
* { box-sizing: border-box; }
body { margin: 0; width: 1366px; height: 768px; overflow: hidden; background: #fff; font-family: "Noto Sans", sans-serif; }
.defs { position: absolute; }
.panel { height: 24px; display: flex; align-items: center; justify-content: space-between; padding: 0 7px 1px 6px; background: linear-gradient(#5c5a4f, #56534b 12%, #403f3a); color: #dfdbd2; }
.wintitle { font: bold 14px "Noto Sans", sans-serif; letter-spacing: .27px; white-space: nowrap; }
.indicators { display: flex; align-items: center; height: 24px; }
.lang { width: 20px; height: 19px; margin-left: 13px; background: #dfdbd2; color: #45433e; border-radius: 2px; font-size: 12.5px; line-height: 20px; text-align: center; }
.bt { margin-left: 11px; }
.bat { margin-left: 13px; }
.pct { width: 46px; margin-left: 3px; font-size: 14px; white-space: nowrap; }
.vol { margin-left: 12px; }
.clock { width: 53px; margin-left: 15px; font-size: 14px; letter-spacing: -.1px; white-space: nowrap; }
.gear { margin-left: 11px; }
.desktop { display: flex; height: 744px; }
.launcher { position: relative; width: 41px; height: 744px; padding: 5px 0 5px 5px; display: flex; flex-direction: column; gap: 5px; background: linear-gradient(#4f0d45, #651158 8px, #651158); border-right: 1px solid #844479; }
.tile { width: 30px; height: 30px; flex: none; }
.trash { margin-top: auto; }
.pips { position: absolute; left: 0; top: 0; }
.amz { font: bold 18px "Noto Sans", sans-serif; fill: #222; }
.browser { width: 1325px; }
.strip { position: relative; height: 29px; background: #3c3b37; }
.shapes { position: absolute; left: 0; top: 0; }
.tabs { position: relative; display: flex; padding-left: 20px; }
.t { width: 43px; height: 28px; padding-top: 2px; display: flex; align-items: center; gap: 6px; flex: none; overflow: hidden; }
.t.s { width: 42px; }
.t svg { width: 16px; height: 16px; flex: none; }
.t span { width: 6px; overflow: hidden; font-size: 14px; line-height: 20px; color: #6b696b; }
.t.wide span { width: 27px; -webkit-mask: linear-gradient(90deg, #000 55%, transparent); mask: linear-gradient(90deg, #000 55%, transparent); }
.t.on { padding-left: 0; gap: 4px; }
.t.on span { color: #333; }
.toolbar { height: 37px; display: flex; align-items: center; background: #f2f1f0; border-bottom: 1px solid #b6b4b2; padding-left: 9px; }
.nav { flex: none; margin-right: -1px; }
.omni { width: 1197px; height: 28px; display: flex; align-items: center; padding: 0 5px 0 6px; border: 1px solid #a3a19f; border-radius: 3px; background: #fff; }
.url { flex: 1; margin-left: 6px; font-size: 13.7px; line-height: 20px; color: #222; }
.url i { font-style: normal; color: #8a8a8a; }
.menu { margin-left: 17px; }
.page { padding: 8px; }
.map { position: relative; width: 600px; height: 400px; overflow: hidden; }
.map > svg { display: block; }
.grayband { position: absolute; left: 0; top: 0; width: 600px; height: 12px; background: #ddd; }
.lbl text { font-family: "Noto Sans", sans-serif; font-size: 32px; paint-order: stroke; stroke: rgba(255,255,255,.65); stroke-width: 5px; }
.lbl .st text { font-size: 30px; font-style: italic; fill: #83608b; }
.lbl .lake text { font-size: 30px; font-style: italic; fill: #4d80b3; }
.lbl .city text { fill: #222; }
.zoom { position: absolute; left: 10px; top: 10px; width: 26px; height: 53px; background: #fff; border-radius: 4px; box-shadow: 0 1px 5px rgba(0,0,0,.65); font: bold 18px/26px "Liberation Sans", Arial, sans-serif; text-align: center; color: #000; }
.zoom a { display: block; height: 26px; }
.zoom a:first-child { height: 27px; border-bottom: 1px solid #ccc; }
.attr { position: absolute; right: 0; bottom: 0; height: 16px; padding: 0 5px; background: rgba(255,255,255,.7); font: 11px/16px "Liberation Sans", Arial, sans-serif; color: #333; white-space: nowrap; }
.attr a { color: #0078a8; }
h1 { margin: 21px 0 0; font: bold 32px/37px "Liberation Serif", "Times New Roman", serif; letter-spacing: .04px; color: #000; }
```
